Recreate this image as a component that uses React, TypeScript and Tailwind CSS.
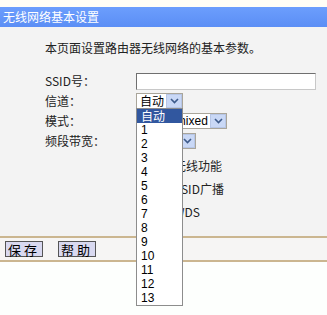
import React from "react";

const cjk = { fontFamily: '"Noto Sans CJK SC", "Liberation Sans", sans-serif' };
const latin = { fontFamily: '"Liberation Sans", "Noto Sans CJK SC", sans-serif' };

const Arrow = () => (
  <span className="flex h-full w-[16px] shrink-0 items-center justify-center border border-[#b7c6e6] bg-[#c9d8f6]">
    <svg width="9" height="6" viewBox="0 0 9 6">
      <polyline points="1,1 4.5,4.5 8,1" fill="none" stroke="#3d5a8a" strokeWidth="1.6" />
    </svg>
  </span>
);

const Select = ({ text, width, font }: { text: string; width: string; font?: React.CSSProperties }) => (
  <div className={`flex h-[16px] ${width} items-center border border-[#a9a59a] bg-white`}>
    <span className="flex-1 whitespace-nowrap pl-[3px] text-[12px] leading-[14px] text-black" style={font}>
      {text}
    </span>
    <Arrow />
  </div>
);

const Row = ({ label, children }: { label: string; children: React.ReactNode }) => (
  <div className="flex h-[20px] items-center">
    <span className="w-[91px] text-[12px] leading-none text-[#222]">{label}</span>
    {children}
  </div>
);

const Check = ({ label }: { label: string }) => (
  <div className="flex h-[23px] items-center pl-[91px]">
    <span className="mr-[1px] h-[13px] w-[13px] border border-[#1c5180] bg-white" />
    <span className="text-[12px] leading-none text-[#222]">{label}</span>
  </div>
);

const channels = ["自动", "1", "2", "3", "4", "5", "6", "7", "8", "9", "10", "11", "12", "13"];

export default function App() {
  return (
    <div className="relative h-[315px] w-[327px] overflow-hidden bg-[#fdfffd]" style={cjk}>
      <div className="h-[7px] bg-[#fffef6]" />
      <div className="flex h-[20px] items-center bg-gradient-to-b from-[#6c9efd] to-[#5b8ef5] pl-[3px] text-[12px] text-white">
        无线网络基本设置
      </div>
      <div className="h-[209px] bg-[#f3f3f3] pl-[45px]">
        <div className="pt-[13px] text-[12px] leading-[16px] text-[#222]">本页面设置路由器无线网络的基本参数。</div>
        <div className="mt-[15px]">
          <Row label="SSID号：">
            <div className="h-[17px] w-[180px] border border-t-[#6f6f6f] border-l-[#6f6f6f] border-b-[#c8c8c8] border-r-[#c8c8c8] bg-white" />
          </Row>
          <Row label="信道：">
            <Select text="自动" width="w-[47px]" />
          </Row>
          <Row label="模式：">
            <Select text="11bgn mixed" width="w-[91px]" font={latin} />
          </Row>
          <Row label="频段带宽：">
            <Select text="自动" width="w-[60px]" />
          </Row>
          <div className="mt-[3px]">
            <Check label="开启无线功能" />
            <Check label="开启SSID广播" />
            <Check label="开启WDS" />
          </div>
        </div>
      </div>
      <div className="h-[2px] bg-[#cbb690]" />
      <div className="flex h-[22px] items-center gap-[15px] bg-[#f6f5f4] pl-[5px]">
        <button className="h-[16px] w-[38px] border border-[#555] bg-[#d9d9f0] text-[13px] leading-none tracking-[3px] text-black">保存</button>
        <button className="h-[16px] w-[38px] border border-[#555] bg-[#d9d9f0] text-[13px] leading-none tracking-[3px] text-black">帮助</button>
      </div>
      <div className="h-[2px] bg-[#cbb690]" />

      <div className="absolute left-[136px] top-[108px] w-[47px] border border-[#8d8d8d] bg-white">
        {channels.map((c, i) => (
          <div
            key={c}
            className={`flex h-[14px] items-center pl-[4px] text-[12px] leading-none ${i === 0 ? "bg-[#31579f] text-white" : "text-black"}`}
            style={i === 0 ? cjk : latin}
          >
            {c}
          </div>
        ))}
      </div>
    </div>
  );
}
